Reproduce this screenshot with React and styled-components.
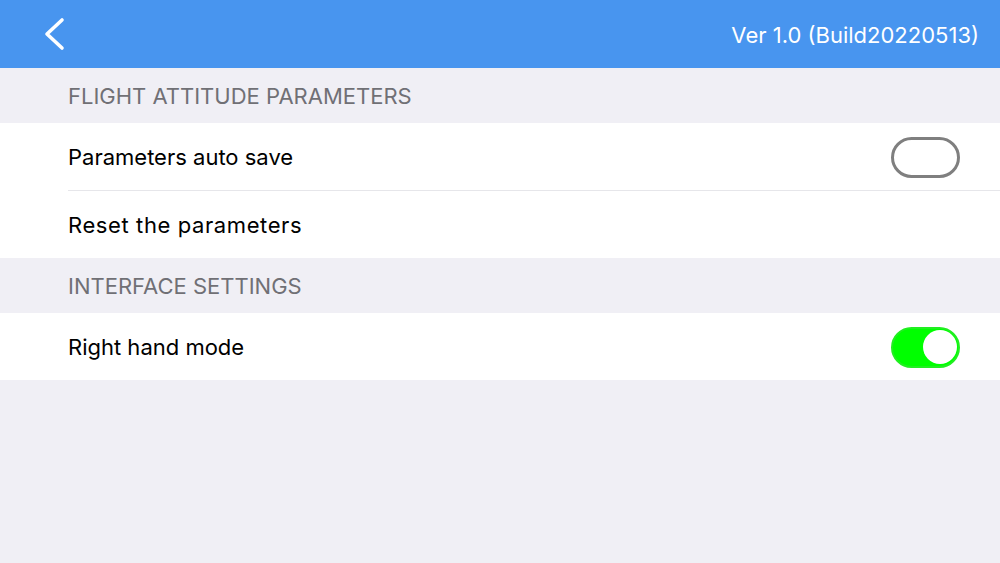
import React, { useState } from 'react';
import styled, { createGlobalStyle } from 'styled-components';

const GlobalStyle = createGlobalStyle`
  html, body {
    margin: 0;
    padding: 0;
    background: #f0eff5;
    font-family: Inter, "Liberation Sans", Arial, sans-serif;
  }
`;

const Page = styled.div`
  width: 1000px;
  height: 563px;
  background: #f0eff5;
  overflow: hidden;
`;

const NavBar = styled.div`
  height: 68px;
  background: #4895ef;
  display: flex;
  align-items: center;
  justify-content: space-between;
  padding: 0 21px 0 42px;
  box-sizing: border-box;
`;

const BackButton = styled.button`
  border: none;
  background: none;
  padding: 0;
  width: 26px;
  height: 34px;
  display: flex;
  align-items: center;
  cursor: pointer;
`;

const Version = styled.div`
  color: #ffffff;
  font-size: 22px;
  padding-top: 2px;
`;

const SectionHeader = styled.div`
  height: 55px;
  display: flex;
  align-items: center;
  padding: 1px 0 0 68px;
  box-sizing: border-box;
  color: #707075;
  font-size: 22px;
`;

const Group = styled.div`
  background: #ffffff;
`;

const Divider = styled.div`
  margin-left: 68px;
  height: 1px;
  background: #e6e6ea;
`;

const SettingRow = styled.div`
  height: 67px;
  display: flex;
  align-items: center;
  justify-content: space-between;
  padding: 1px 40px 0 68px;
  box-sizing: border-box;
  font-size: 22px;
  color: #000000;
`;

const Label = styled.span`
  letter-spacing: ${p => p.$spacing || 0}px;
`;

const Track = styled.button`
  width: 69px;
  height: 41px;
  border-radius: 21px;
  box-sizing: border-box;
  padding: 0;
  border: ${p => (p.$on ? '2px solid #22ee22' : '3px solid #7f7f7f')};
  background: ${p => (p.$on ? '#00ff00' : '#ffffff')};
  position: relative;
  cursor: pointer;
`;

const Knob = styled.span`
  position: absolute;
  top: 1.5px;
  right: 1.5px;
  width: 34px;
  height: 34px;
  border-radius: 50%;
  background: #ffffff;
`;

const Toggle = ({ on, onChange }) => (
  <Track $on={on} onClick={() => onChange(!on)}>
    {on && <Knob />}
  </Track>
);

const Chevron = () => (
  <svg width="26" height="34" viewBox="0 0 26 34">
    <path d="M20 3 L5 17 L20 31" fill="none" stroke="#ffffff" strokeWidth="3.6" strokeLinecap="round" strokeLinejoin="round" />
  </svg>
);

export default function App() {
  const [autoSave, setAutoSave] = useState(false);
  const [rightHand, setRightHand] = useState(true);

  return (
    <Page>
      <GlobalStyle />
      <NavBar>
        <BackButton>
          <Chevron />
        </BackButton>
        <Version>Ver 1.0 (Build20220513)</Version>
      </NavBar>

      <SectionHeader>FLIGHT ATTITUDE PARAMETERS</SectionHeader>
      <Group>
        <SettingRow>
          <Label>Parameters auto save</Label>
          <Toggle on={autoSave} onChange={setAutoSave} />
        </SettingRow>
        <Divider />
        <SettingRow>
          <Label $spacing={0.6}>Reset the parameters</Label>
        </SettingRow>
      </Group>

      <SectionHeader>INTERFACE SETTINGS</SectionHeader>
      <Group>
        <SettingRow>
          <Label>Right hand mode</Label>
          <Toggle on={rightHand} onChange={setRightHand} />
        </SettingRow>
      </Group>
    </Page>
  );
}
